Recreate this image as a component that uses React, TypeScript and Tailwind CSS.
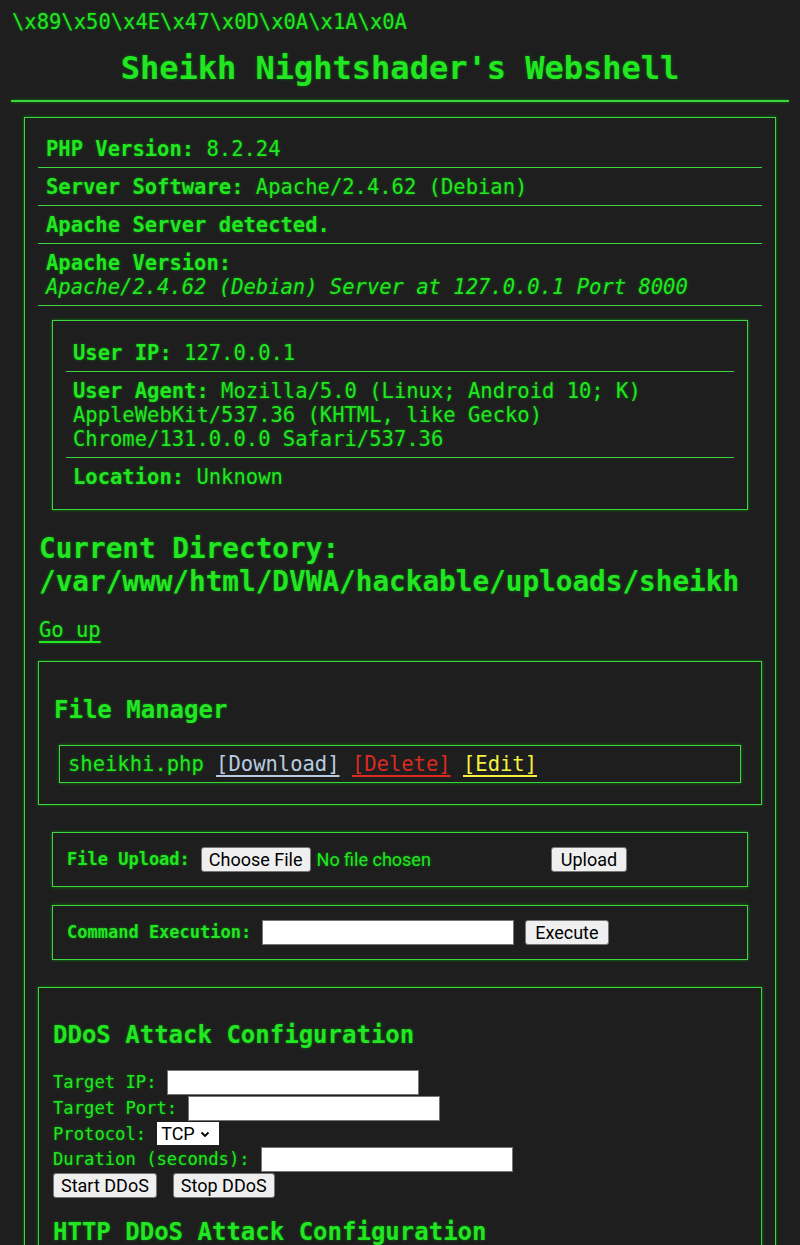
// Static mockup of a dark green terminal-style panel
const mono = "font-['DejaVu_Sans_Mono',monospace]";
const btn =
  "font-['Roboto',sans-serif] text-[18px] leading-[21px] text-black bg-[#efefef] border border-[#767676] rounded-[3px] px-[9px] py-[1px] [text-shadow:none]";
const field = "bg-white border border-[#767676] h-[25px]";
const box = "border border-[#3fd43f] shadow-[0_0_3px_#0a8a0a]";

function InfoRow({ label, children, last, inner }: { label: string; children?: React.ReactNode; last?: boolean; inner?: boolean }) {
  return (
    <div
      className={`${inner ? "px-[7px]" : "px-[8px]"} pt-[7px] leading-[24px] ${last ? "pb-[7px]" : "pb-[6px] border-b border-[#3fd43f]"}`}
    >
      <span className="font-bold">{label}</span> {children}
    </div>
  );
}

export default function App() {
  return (
    <div
      className={`${mono} min-h-[1245px] bg-[#1e1e1e] text-[#22e622] [text-shadow:0_0_3px_#0c7a0c] px-[11px] pt-[10px] pb-8`}
    >
      <div className="text-[20.5px] leading-[24px] pl-[1px]">\x89\x50\x4E\x47\x0D\x0A\x1A\x0A</div>
      <h1 className="text-center font-bold text-[32px] leading-[40px] mt-[14px]">Sheikh Nightshader's Webshell</h1>
      <div className="h-[2px] bg-[#3fd43f] shadow-[0_0_3px_#0a8a0a] mt-[12px]" />

      <div className={`${box} mx-[13px] mt-[15px] px-[13px] pt-[12px] pb-6 text-[20.5px]`}>
        <InfoRow label="PHP Version:">8.2.24</InfoRow>
        <InfoRow label="Server Software:">Apache/2.4.62 (Debian)</InfoRow>
        <InfoRow label="Apache Server detected." />
        <div className="px-[8px] pt-[7px] pb-[6px] leading-[24px] border-b border-[#3fd43f]">
          <div className="font-bold">Apache Version:</div>
          <div className="italic">Apache/2.4.62 (Debian) Server at 127.0.0.1 Port 8000</div>
        </div>

        <div className={`${box} mx-[14px] mt-[14px] px-[13px] py-[13px]`}>
          <InfoRow label="User IP:" inner>
            127.0.0.1
          </InfoRow>
          <InfoRow label="User Agent:" inner>
            Mozilla/5.0 (Linux; Android 10; K) AppleWebKit/537.36 (KHTML, like Gecko) Chrome/131.0.0.0 Safari/537.36
          </InfoRow>
          <InfoRow label="Location:" inner last>
            Unknown
          </InfoRow>
        </div>

        <h2 className="font-bold text-[27.7px] leading-[33px] mt-[22px] pl-[1px]">
          Current Directory: /var/www/html/DVWA/hackable/uploads/sheikh
        </h2>
        <div className="mt-[20px] leading-[24px] pl-[1px]">
          <span className="underline underline-offset-[4px]">Go up</span>
        </div>

        <div className={`${box} mt-[19px] px-[15px] pt-[34px] pb-[21px]`}>
          <h3 className="font-bold text-[24px] leading-[28px]">File Manager</h3>
          <div className={`${box} mx-[5px] mt-[21px] px-[8px] py-[6px] leading-[24px] whitespace-nowrap`}>
            sheikhi.php{" "}
            <span className="text-[#b8cce0] [text-shadow:none] underline underline-offset-[4px]">[Download]</span>{" "}
            <span className="text-[#dd2a22] [text-shadow:none] underline underline-offset-[4px]">[Delete]</span>{" "}
            <span className="text-[#f4f040] [text-shadow:none] underline underline-offset-[4px]">[Edit]</span>
          </div>
        </div>

        <div className={`${box} mx-[14px] mt-[27px] h-[55px] px-[14px] flex items-center text-[17px]`}>
          <span className="font-bold">File Upload:</span>
          <div className="ml-[11px] w-[350px] flex items-center">
            <span className={`${btn} !px-[7px]`}>Choose File</span>
            <span className="ml-[6px] font-['Roboto',sans-serif] text-[18px]">No file chosen</span>
          </div>
          <span className={btn}>Upload</span>
        </div>

        <div className={`${box} mx-[14px] mt-[18px] h-[55px] px-[14px] flex items-center text-[17px]`}>
          <span className="font-bold">Command Execution:</span>
          <div className={`${field} ml-[11px] w-[252px]`} />
          <span className={`${btn} ml-[11px]`}>Execute</span>
        </div>

        <div className={`${box} mt-[27px] px-[14px] pt-[33px] pb-[20px] text-[17.2px]`}>
          <h3 className="font-bold text-[24px] leading-[28px]">DDoS Attack Configuration</h3>
          <div className="mt-[20px] flex flex-col leading-[20px]">
            <div className="flex items-center h-[26px]">
              Target IP:<div className={`${field} ml-[11px] w-[252px]`} />
            </div>
            <div className="flex items-center h-[26px]">
              Target Port:<div className={`${field} ml-[11px] w-[252px]`} />
            </div>
            <div className="flex items-center h-[25px]">
              Protocol:
              <span className="ml-[11px] bg-white text-black font-['Roboto',sans-serif] text-[18px] h-[23px] w-[62px] pl-[4px] flex items-center gap-[4px] [text-shadow:none]">
                TCP
                <svg width="12" height="12" viewBox="0 0 12 12">
                  <path d="M2.5 4.5 L6 8 L9.5 4.5" fill="none" stroke="#000" strokeWidth="1.8" />
                </svg>
              </span>
            </div>
            <div className="flex items-center h-[26px]">
              Duration (seconds):<div className={`${field} ml-[11px] w-[252px]`} />
            </div>
            <div className="flex items-center gap-[16px] h-[26px]">
              <span className={`${btn} !px-[7px]`}>Start DDoS</span>
              <span className={`${btn} !px-[7px]`}>Stop DDoS</span>
            </div>
          </div>
          <h3 className="font-bold text-[24px] leading-[28px] mt-[20px]">HTTP DDoS Attack Configuration</h3>
        </div>
      </div>
    </div>
  );
}
